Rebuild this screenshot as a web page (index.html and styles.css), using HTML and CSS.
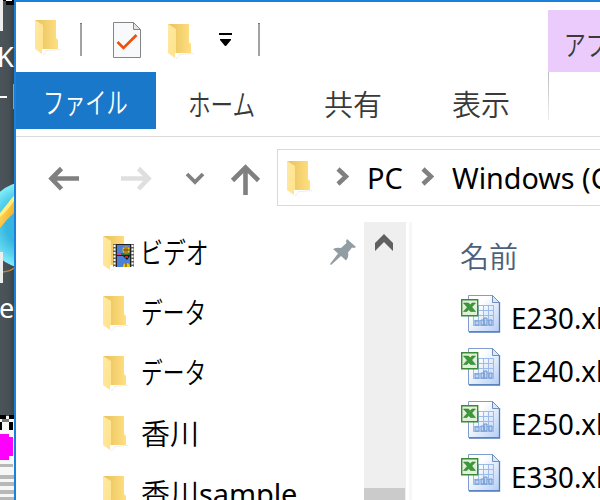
FILE: index.html
```html
<!DOCTYPE html>
<html lang="ja">
<head>
<meta charset="utf-8">
<title>Windows (C:)</title>
<link rel="stylesheet" href="styles.css">
</head>
<body>
<svg class="defs" width="0" height="0">
  <defs>
    <linearGradient id="back"><stop offset=".2" stop-color="#ecc763"/><stop offset="1" stop-color="#ffdf80"/></linearGradient>
    <linearGradient id="flap" x2="1" y2="1"><stop stop-color="#ffe9a2"/><stop offset="1" stop-color="#ffe28b"/></linearGradient>
    <linearGradient id="paper" x2="1" y2="1"><stop offset=".3" stop-color="#fff"/><stop offset="1" stop-color="#b4cdf5"/></linearGradient>
    <linearGradient id="desk" x2="1"><stop stop-color="#4b545a"/><stop offset=".6" stop-color="#465055"/><stop offset="1" stop-color="#3a4347"/></linearGradient>
    <radialGradient id="globe"><stop offset=".5" stop-color="#35b5df"/><stop offset=".8" stop-color="#5ed5ee"/><stop offset="1" stop-color="#82effa"/></radialGradient>
    <linearGradient id="ring" x2="1" y2="1"><stop stop-color="#fff07a"/><stop offset="1" stop-color="#f49a12"/></linearGradient>
    <symbol id="folder" viewBox="0 0 26 36">
      <path d="M7 34l3-1 1-3 14-1 1 1-14 1-3 4z" fill="#eee" />
      <path d="M0 0h21v18l2 2v9H7z" fill="url(#back)"/>
      <path d="M0 0l8 5v24H7v5L0 29z" fill="url(#flap)"/>
    </symbol>
    <symbol id="excel" viewBox="0 0 40 40">
      <path d="M7.500 1.500h24l7 7v29h-31z" fill="url(#paper)" stroke="#7e9ccd"/>
      <path d="M38.500 8v30H8" fill="none" stroke="#4f7bbd" stroke-width="1.300"/>
      <path d="M31.500 1.500v7h7z" fill="#dce8fa" stroke="#6f8fbd"/>
      <path d="M18 11.500h15M18 16.500h15M12 21.500h21M12 26.500h21M12 31.500h21M12.500 21v11M17.500 11v20M22.500 11v20M27.500 11v20M32.500 11v21" stroke="#9dbbe8" fill="none"/>
      <path d="M14 31v-4h4v4zM20 31v-5h3v5zM23 31v-7h3v7zM28 31v-5h3v5z" fill="#bed4f5" stroke="#6f96cf"/>
      <path d="M.7 5.700h16v16H.7z" fill="#e2f0da" stroke="#3b8b36" stroke-width="1.400"/>
      <path d="M2.500 9h5l1.700 2L11 9h3.500l-3.700 4 3.700 4.500h-5l-1.700-2L6 17.500H2.500l3.800-4.300z" fill="#3b9a37" stroke="#24752a" stroke-width=".5"/>
    </symbol>
  </defs>
</svg>
<div class="screen">
  <svg class="desktop" width="14" height="500" viewBox="0 0 14 500">
    <path fill="url(#desk)" d="M0 0h14v416H0z"/>
    <path d="M0 0h14v1H0zM6 1h8v4H6z" fill="#000"/><path d="M6 0h6v1H6z" fill="#fff"/>
    <path d="M0 0h3v31H0z" fill="#eee"/>
    <text class="desk-text" x="-3" y="67">K</text>
    <path d="M0 96h7v2H0z" fill="#fff"/><path d="M13 84h1v25h-1z" fill="#8ca0aa"/>
    <circle cx="28" cy="225" r="43.500" fill="url(#globe)"/>
    <path d="M0 214C5 208 9 203 14 195v18Q7 219 0 228z" fill="url(#ring)"/>
    <path d="M0 213C5 207 9 201 14 196v5Q7 211 0 217z" fill="#fff07a"/>
    <path d="M0 272q9 0 14-4" fill="none" stroke="#bd8638" stroke-width="1.500"/>
    <path d="M0 252h3v31H0z" fill="#eee"/>
    <text class="desk-text" x="-1" y="318">e</text>
    <path d="M0 416h14v84H0z" fill="#f7f7f7"/>
    <path d="M0 415h6v4H0zM9 415h5v4H9zM0 422h2v8H0zM9 422h4v8H9z" fill="#000"/><path d="M2 419h7v3H2z" fill="#777"/>
    <path d="M0 434h9v3h4v19H9v4H0z" fill="#f0f"/>
    <path d="M0 464h13v3H0zM0 475h14v4H0zM0 482h14v4H0zM0 490h14v4H0zM0 497h14v3H0z" fill="#b8b8b8"/>
  </svg>
  <main class="window">
    <header class="titlebar">
      <svg class="folder first"><use href="#folder"/></svg>
      <i class="divider d1"></i>
      <svg class="check" width="28" height="36" viewBox="0 0 28 36"><path d="M.5.5h20l7 7v28H.5z" fill="#f8f9fa" stroke="#858585"/><path d="M20.500.5v7h7z" fill="#e4e4e4" stroke="#858585"/><path d="M4.500 20l6 6L23.500 13" fill="none" stroke="#ee500c" stroke-width="2.600"/></svg>
      <svg class="folder second"><use href="#folder"/></svg>
      <svg class="customize" width="13" height="13" viewBox="0 0 13 13"><path d="M0 0h13v2H0zM1 6h11v1L7 13H6L1 7z"/></svg>
      <i class="divider d2"></i>
      <div class="context"><span class="kana">アプリ</span></div>
    </header>
    <nav class="tabs">
      <div class="file"><span class="kana">ファイル</span></div>
      <div class="tab home"><span class="kana">ホーム</span></div>
      <div class="tab share">共有</div>
      <div class="tab view">表示</div>
      <i class="tab-edge"></i>
    </nav>
    <div class="navigation">
      <svg class="arrows" width="261" height="85" viewBox="16 137 261 85" fill="none" stroke="#808080" stroke-width="4.600">
        <path d="M79 178.500H52M61.500 168.500l-10 10 10 10.500"/>
        <path stroke="#dfdfdf" d="M121 178.500h27M138.500 168.500l10 10-10 10.500"/>
        <path stroke-width="3.800" d="M187 174l8 8 8-8"/>
        <path d="M245.500 195v-27M232.500 180.500l13-13 13 13"/>
      </svg>
      <div class="address">
        <svg class="folder"><use href="#folder"/></svg>
        <svg class="chevron c1" width="13" height="19" viewBox="0 0 13 19"><path d="M2 2l8 7.500L2 17"/></svg>
        <span class="crumb pc">PC</span>
        <svg class="chevron c2" width="13" height="19" viewBox="0 0 13 19"><path d="M2 2l8 7.500L2 17"/></svg>
        <span class="crumb drive">Windows (C:)</span>
      </div>
    </div>
    <div class="content">
      <aside class="tree">
        <div class="place"><svg class="folder"><use href="#folder"/></svg>
          <svg class="film" width="21" height="23" viewBox="0 0 21 23"><path fill="#636363" d="M0 0h21v23H0z"/><path d="M1.500 1v22M19.500 1v22" stroke="#fff" stroke-width="2" stroke-dasharray="2 1.500"/><path fill="#222" d="M3 0h15v23H3z"/><path fill="#4c7fd6" d="M4 1h13v10H4zM4 12h13v11H4z"/><path fill="#d84c62" d="M4 9h5v2H4z"/><path fill="#267745" d="M8 9h9v2H8z"/><circle cx="13" cy="6" r="3.500" fill="#e7cc13"/><path d="M12 3v6M14 3v6M10 6h7" stroke="#823d19"/><path fill="#171717" d="M10 12h7l-3 4z"/><path fill="#d71e20" d="M12 12h3v2h-3z"/><path d="M10 23q0-4 3.500-4t3.500 4" fill="#e7cc13"/><path d="M13 19v4" stroke="#702717"/></svg>
          <span class="kana video">ビデオ</span></div>
        <div class="place"><svg class="folder"><use href="#folder"/></svg><span class="kana">データ</span></div>
        <div class="place"><svg class="folder"><use href="#folder"/></svg><span class="kana">データ</span></div>
        <div class="place"><svg class="folder"><use href="#folder"/></svg><span class="kanji">香川</span></div>
        <div class="place"><svg class="folder"><use href="#folder"/></svg><span class="kanji">香川<span class="latin">sample</span></span></div>
        <svg class="pin" width="26" height="26" viewBox="0 0 26 26"><path fill="#919da3" d="M17 0l9 8-2 1-2-.5-4 5q1 5-2 8l-5-4.500L1 26l-1-1 8-10.500-5-4.500q4-2 8-1l5.500-5-.5-2z"/></svg>
      </aside>
      <div class="scrollbar"><svg width="18" height="17" viewBox="0 0 18 17"><path fill="#606060" d="M9 0l9 9v8L9 8 0 17V9z"/></svg><i class="thumb"></i></div>
      <section class="files">
        <div class="heading">名前</div>
        <div class="file-row"><svg class="excel"><use href="#excel"/></svg><span>E230.xls</span></div>
        <div class="file-row"><svg class="excel"><use href="#excel"/></svg><span>E240.xls</span></div>
        <div class="file-row"><svg class="excel"><use href="#excel"/></svg><span>E250.xls</span></div>
        <div class="file-row"><svg class="excel"><use href="#excel"/></svg><span>E330.xls</span></div>
      </section>
    </div>
  </main>
</div>
</body>
</html>
```
FILE: styles.css
```css
* { box-sizing: border-box; }
body { margin: 0; overflow: hidden; background: #fff; color: #000; font: 29px/40px "Noto Sans", "Noto Sans CJK JP", sans-serif; }
svg { display: block; flex: none; }
.defs { position: absolute; }
.screen { display: flex; width: 600px; height: 500px; overflow: hidden; }
.desk-text { font: 27px "Noto Sans", sans-serif; fill: #fff; }
.window { width: 586px; height: 500px; border-left: 2px solid #1a80d9; border-top: 2px solid #1a80d9; overflow: hidden; }
.titlebar { display: flex; height: 70px; align-items: flex-start; }
.folder { width: 26px; height: 36px; flex: none; }
.first { margin: 18px 0 0 19px; }
.second { margin: 22px 0 0 27px; }
.divider { width: 2px; height: 33px; background: #a3a3a3; border-top: 1px solid #777; flex: none; }
.d1 { margin: 21px 0 0 19px; }
.check { margin: 20px 0 0 31px; }
.customize { margin: 31px 0 0 25px; }
.d2 { margin: 21px 0 0 26px; }
.context { margin: 8px 0 0 288px; width: 52px; height: 62px; padding: 13px 0 0 16px; background: #eacbfc; color: #393939; overflow: hidden; flex: none; }
.kana { display: inline-block; white-space: nowrap; font-family: "Noto Sans CJK JP", sans-serif; font-weight: 350; transform: scaleX(.75); transform-origin: left; }
.tabs { display: flex; height: 65px; border-bottom: 1px solid #dadada; color: #393939; font-family: "Noto Sans CJK JP", sans-serif; font-weight: 350; }
.file { width: 140px; height: 57px; padding: 9px 0 0 27px; background: #1a78ca; color: #fff; flex: none; }
.file .kana { transform: scaleX(.73); }
.tab { padding-top: 11px; flex: none; }
.home { width: 168px; padding-left: 32px; }
.home .kana { transform: scaleX(.78); }
.share { width: 128px; }
.view { width: 96px; }
.tab-edge { width: 1px; height: 48px; background: linear-gradient(#bbb, #f0f0f0); }
.navigation { display: flex; height: 85px; }
.address { display: flex; width: 330px; height: 57px; margin-top: 12px; border: 1px solid #d9d9d9; flex: none; }
.address .folder { margin: 11px 0 0 9px; }
.chevron { fill: none; stroke: #808080; stroke-width: 4.500; margin-top: 17px; }
.c1 { margin-left: 23px; }
.c2 { margin-left: 20px; }
.crumb { padding-top: 8px; white-space: nowrap; flex: none; }
.pc { width: 34px; margin-left: 18px; }
.drive { margin-left: 18px; transform: scaleX(.99); transform-origin: left; }
.content { display: flex; height: 278px; }
.tree { position: relative; width: 348px; padding-top: 1px; flex: none; }
.place { display: flex; height: 60px; padding: 13px 0 0 87px; align-items: flex-start; position: relative; }
.place > span { margin: -5px 0 0 12px; }
.place > .kanji { margin-top: -4px; }
.place > .video { transform: scaleX(.79); margin-left: 11px; }
.kanji { font-family: "Noto Sans CJK JP", sans-serif; font-weight: 350; white-space: nowrap; }
.latin { font-family: "Noto Sans", sans-serif; font-weight: 400; letter-spacing: -.1px; }
.film { position: absolute; left: 97px; top: 21px; }
.pin { position: absolute; left: 314px; top: 17px; }
.scrollbar { width: 42px; padding: 12px 0 0 11px; background: #efefef; display: flex; flex-direction: column; flex: none; }
.thumb { margin: auto 0 0 -11px; width: 41px; height: 12px; background: #cbcbcb; }
.files { width: 191px; margin-left: 3px; border-left: 3px solid #f7f7f7; padding-left: 48px; overflow: hidden; flex: none; }
.heading { height: 72px; padding-top: 13px; color: #4c607a; font-family: "Noto Sans CJK JP", sans-serif; font-weight: 350; }
.file-row { display: flex; height: 53px; margin-left: 1px; white-space: nowrap; }
.excel { width: 40px; height: 40px; }
.file-row span { margin: 4px 0 0 10px; transform: scaleX(.955); transform-origin: left; }
```
